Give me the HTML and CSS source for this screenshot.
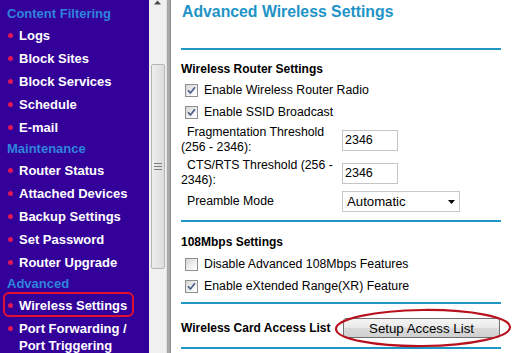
FILE: index.html
```html
<!DOCTYPE html>
<html lang="en-US">
<head>
    <meta charset="UTF-8">
    <meta name="viewport" content="width=device-width">
    <title>Advanced Wireless Settings</title>
    <link rel="stylesheet" href="styles.css">
</head>
<body>

<div class=frame>

<nav class=menu>
  <div class=menu-head>Content Filtering</div>
  <div class=menu-item>Logs</div>
  <div class=menu-item>Block Sites</div>
  <div class=menu-item>Block Services</div>
  <div class=menu-item>Schedule</div>
  <div class=menu-item>E-mail</div>
  <div class=menu-head>Maintenance</div>
  <div class=menu-item>Router Status</div>
  <div class=menu-item>Attached Devices</div>
  <div class=menu-item>Backup Settings</div>
  <div class=menu-item>Set Password</div>
  <div class=menu-item>Router Upgrade</div>
  <div class=menu-head>Advanced</div>
  <div class="menu-item current">Wireless Settings</div>
  <div class=menu-item>Port Forwarding / Port Triggering</div>
</nav>

<div class=scrollbar>
  <svg class=scroll-up width="17" height="8" viewBox="0 0 17 8">
    <polygon points="5,4.5 12,4.5 8.5,0.5" fill="#4a4a4a"/>
  </svg>
  <div class=scroll-thumb><span class=grip></span></div>
</div>

<div class=divider></div>

<main class=content>
  <h1 class=page-title>Advanced Wireless Settings</h1>
  <div class=rule></div>

  <div class=section-title>Wireless Router Settings</div>
  <div class=check-row>
    <span class="cb on"><svg width="11" height="11" viewBox="0 0 11 11"><path d="M2 5.2 L4.4 8 L9 2.2" fill="none" stroke="#4b5e88" stroke-width="1.7"/></svg></span>
    Enable Wireless Router Radio
  </div>
  <div class=check-row>
    <span class="cb on"><svg width="11" height="11" viewBox="0 0 11 11"><path d="M2 5.2 L4.4 8 L9 2.2" fill="none" stroke="#4b5e88" stroke-width="1.7"/></svg></span>
    Enable SSID Broadcast
  </div>

  <div class=fields>
    <div class=field-label>Fragmentation Threshold (256 - 2346):</div>
    <div><input class=num value="2346"></div>
    <div class=field-label>CTS/RTS Threshold (256 - 2346):</div>
    <div><input class=num value="2346"></div>
    <div class=field-label>Preamble Mode</div>
    <div class=select>
      <span>Automatic</span>
      <svg width="7" height="4" viewBox="0 0 7 4"><polygon points="0,0 7,0 3.5,4" fill="#000"/></svg>
    </div>
  </div>
  <div class="rule gap-a"></div>

  <div class="section-title second">108Mbps Settings</div>
  <div class=check-row>
    <span class=cb></span>
    Disable Advanced 108Mbps Features
  </div>
  <div class=check-row>
    <span class="cb on"><svg width="11" height="11" viewBox="0 0 11 11"><path d="M2 5.2 L4.4 8 L9 2.2" fill="none" stroke="#4b5e88" stroke-width="1.7"/></svg></span>
    Enable eXtended Range(XR) Feature
  </div>
  <div class="rule gap-b"></div>

  <div class=access-row>
    <div class=section-name>Wireless Card Access List</div>
    <div class=button-wrap>
      <button class=btn>Setup Access List</button>
      <svg class=ring width="178" height="40" viewBox="0 0 178 40">
        <ellipse cx="89" cy="20" rx="87" ry="18" fill="none" stroke="#b8121f" stroke-width="2.2" transform="rotate(-0.6 89 20)"/>
      </svg>
    </div>
  </div>
  <div class=rule></div>
</main>

</div>

</body>
</html>
```

FILE: styles.css
```css
body {
    margin: 0;
    width: 516px;
    height: 353px;
    overflow: hidden;
    font-family: "Liberation Sans", Arial, sans-serif;
    background: #fff;
}
.frame {
    display: flex;
    height: 353px;
}

/* left menu */
.menu {
    width: 149px;
    flex: none;
    box-sizing: border-box;
    padding-top: 4px;
    background: #330099;
}
.menu-head {
    height: 20px;
    line-height: 20px;
    padding-left: 7px;
    color: #2f84dd;
    font-size: 13px;
    font-weight: bold;
}
.menu-item {
    display: flex;
    align-items: flex-start;
    gap: 6px;
    padding: 3px 0 3px 8px;
    color: #fff;
    font-size: 13px;
    font-weight: bold;
    line-height: 17px;
}
.menu-item::before {
    content: "";
    flex: none;
    width: 5px;
    height: 5px;
    margin-top: 6px;
    border-radius: 50%;
    background: #e0165a;
}
.menu-item.current {
    position: relative;
}
.menu-item.current::after {
    content: "";
    position: absolute;
    left: 3px;
    top: -2px;
    width: 131px;
    height: 25px;
    box-sizing: border-box;
    border: 2px solid #e0102e;
    border-radius: 6px;
}

/* scrollbar of the menu frame */
.scrollbar {
    width: 17px;
    flex: none;
    display: flex;
    flex-direction: column;
    align-items: center;
    background: #f0f0f0;
}
.scroll-up {
    display: block;
}
.scroll-thumb {
    width: 14px;
    height: 205px;
    margin-top: 56px;
    box-sizing: border-box;
    display: flex;
    align-items: center;
    justify-content: center;
    border: 1px solid #b6b6b6;
    border-radius: 2px;
    background: linear-gradient(to right, #eeeeee, #dcdcdc);
}
.grip {
    width: 8px;
    height: 7px;
    background: repeating-linear-gradient(#7c7c7c 0 1px, transparent 1px 3px);
}
.divider {
    width: 5px;
    flex: none;
    background: linear-gradient(to right, #e2e2e2 0 1px, #a8a8a8 1px 4px, #8c8c8c 4px);
}

/* content */
.content {
    flex: 1;
    padding: 0 15px 0 10px;
    font-size: 12.3px;
    color: #000;
}
.page-title {
    height: 48px;
    box-sizing: border-box;
    margin: 0;
    padding: 4px 0 0 1px;
    font-size: 15.8px;
    line-height: 16px;
    color: #1d93c6;
}
.rule {
    height: 2px;
    background: #1f96c3;
}
.rule.gap-a {
    margin-top: 8px;
}
.rule.gap-b {
    margin-top: 5px;
}
.section-title {
    padding-top: 11px;
    margin-bottom: 2px;
    font-size: 12px;
    font-weight: bold;
    line-height: 16px;
}
.section-title.second {
    padding-top: 12px;
    margin-bottom: 3px;
}
.check-row {
    display: flex;
    align-items: center;
    gap: 6px;
    height: 22px;
    padding-left: 4px;
}
.cb {
    width: 13px;
    height: 13px;
    box-sizing: border-box;
    display: flex;
    align-items: center;
    justify-content: center;
    border: 1px solid #8e8f8f;
    background: linear-gradient(135deg, #d6d6d6, #f6f6f6 70%, #fff);
}
.cb svg {
    display: block;
}
.fields {
    display: grid;
    grid-template-columns: 158px 1fr;
    column-gap: 3px;
    row-gap: 3px;
    margin-top: 2px;
    align-items: center;
}
.field-label {
    line-height: 15px;
    text-indent: 6px;
}
.num {
    width: 56px;
    height: 21px;
    box-sizing: border-box;
    margin: 0;
    padding: 0 0 0 2px;
    border: 1px solid #c5c5c5;
    font: 12.5px "Liberation Sans", Arial, sans-serif;
    color: #000;
    display: block;
}
.select {
    width: 118px;
    height: 21px;
    box-sizing: border-box;
    display: flex;
    align-items: center;
    justify-content: space-between;
    padding: 0 4px 0 4px;
    border: 1px solid #c8c8c8;
    font-size: 13.2px;
}
.select svg {
    display: block;
}
.access-row {
    display: grid;
    grid-template-columns: 158px 1fr;
    column-gap: 3px;
    align-items: center;
    padding: 14px 0 9px;
}
.section-name {
    font-size: 12px;
    font-weight: bold;
}
.button-wrap {
    position: relative;
    width: 157px;
    height: 20px;
    margin-left: 1px;
}
.btn {
    display: block;
    width: 157px;
    height: 20px;
    margin: 0;
    padding: 0;
    border: 1px solid #707070;
    border-radius: 3px;
    background: linear-gradient(#f6f6f6, #e8e8e8 50%, #dadada 51%, #d0d0d0);
    font: 13.3px "Liberation Sans", Arial, sans-serif;
    color: #000;
}
.ring {
    position: absolute;
    left: -9px;
    top: -10px;
}
```
